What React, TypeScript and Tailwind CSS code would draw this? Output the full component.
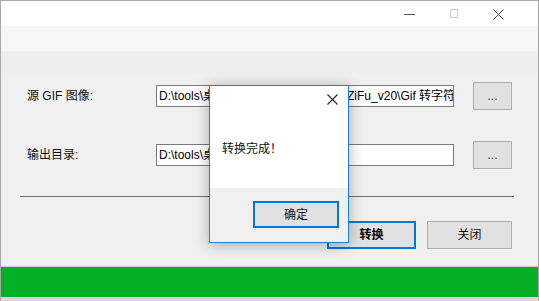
import React from 'react';

const ui = "font-['Liberation_Sans','Noto_Sans_CJK_SC',sans-serif]";

function TitleBar() {
  return (
    <div className="h-[25px] bg-white flex items-start">
      <div className="flex-1" />
      {/* minimize */}
      <div className="w-[11px] h-px bg-[#555] mt-[13px] mr-[35px]" />
      {/* maximize (disabled) */}
      <div className="w-[8px] h-[9px] border border-[#cfcfcf] mt-[8px] mr-[35px]" />
      {/* close */}
      <svg width="11" height="11" viewBox="0 0 11 11" className="mt-[8px] mr-[34px]">
        <path d="M0.5 0.5 L10.5 10.5 M10.5 0.5 L0.5 10.5" stroke="#444" strokeWidth="1" fill="none" />
      </svg>
    </div>
  );
}

function PathRow({ label, value, top }: { label: string; value: string; top: string }) {
  return (
    <div className={`flex items-center h-[28px] ${top}`}>
      <div className="w-[155px] pl-[26px] text-[12px] text-[#111]">{label}</div>
      <div className="w-[298px] h-[22px] bg-white border border-[#7a7a7a] overflow-hidden whitespace-nowrap px-[2px] text-[12px] leading-[20px] text-black">
        {value}
      </div>
      <div className="ml-[19px] w-[39px] h-[28px] bg-[#e1e1e1] border border-[#adadad] flex items-center justify-center text-[12px] text-[#333]">
        ...
      </div>
    </div>
  );
}

function Dialog() {
  return (
    <div className="absolute left-[208px] top-[84px] w-[140px] h-[158px] border border-[#1883d7] bg-[#f0f0f0] shadow-[0_2px_14px_rgba(0,0,0,0.3)] flex flex-col">
      <div className="h-[102px] bg-white flex flex-col">
        <div className="flex justify-end pt-[8px] pr-[10px]">
          <svg width="11" height="11" viewBox="0 0 11 11">
            <path d="M0.5 0.5 L10.5 10.5 M10.5 0.5 L0.5 10.5" stroke="#222" strokeWidth="1.1" fill="none" />
          </svg>
        </div>
        <div className="mt-[35px] pl-[12px] text-[12px] text-[#111]">转换完成！</div>
      </div>
      <div className="flex justify-end pt-[13px] pr-[9px]">
        <div className="w-[86px] h-[27px] bg-[#e1e1e1] border-2 border-[#0078d7] flex items-center justify-center text-[12px] text-[#111]">
          确定
        </div>
      </div>
    </div>
  );
}

export default function App() {
  return (
    <div className={`relative w-[539px] h-[301px] bg-[#f0f0f0] border-t border-x border-[#a8a8a8] flex flex-col ${ui}`}>
      <TitleBar />
      <div className="h-[25px] bg-[#f6f6f6]" />
      <div className="h-[22px] bg-[#eeeeee]" />
      <div className="flex-1 flex flex-col bg-[#f0f0f0]">
        <PathRow label="源 GIF 图像:" value="D:\tools\桌面\素材\动图工具\v20\GifZiFu_v20\Gif 转字符画.exe" top="mt-[9px]" />
        <PathRow label="输出目录:" value="D:\tools\桌面\GifZiFu" top="mt-[31px]" />
        <div className="mt-[27px] ml-[19px] w-[494px] h-px bg-[#6d6d6d]" />
        <div className="mt-[24px] flex justify-end pr-[26px] gap-[11px]">
          <div className="w-[89px] h-[28px] bg-[#e1e1e1] border-2 border-[#0078d7] flex items-center justify-center text-[12px] font-bold text-black">
            转换
          </div>
          <div className="w-[85px] h-[28px] bg-[#e1e1e1] border border-[#adadad] flex items-center justify-center text-[12px] text-[#111]">
            关闭
          </div>
        </div>
        <div className="mt-[17px] h-px bg-[#c9c9d2]" />
        <div className="h-[30px] bg-[#06b025]" />
        <div className="flex-1 bg-[#d8d8d8]" />
      </div>
      <Dialog />
    </div>
  );
}
